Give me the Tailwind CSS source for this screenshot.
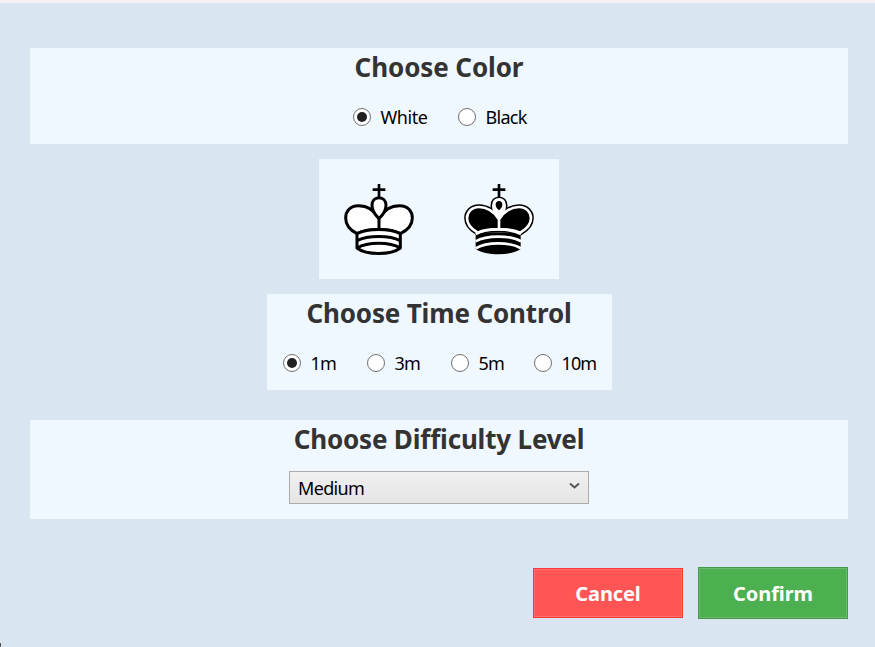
<!DOCTYPE html>
<html lang="en">
<head>
<meta charset="utf-8">
<title>Game setup</title>
<script src="https://cdn.jsdelivr.net/npm/@tailwindcss/browser@4"></script>
</head>
<body class="w-[875px] h-[647px] overflow-hidden bg-[#d9e5f0] border-t-3 border-[#f6eff5] font-['Noto_Sans','Open_Sans',sans-serif] text-black">
<main class="flex flex-col items-center pt-[45px] pl-[30px] pr-[27px]">
  <section class="w-full h-24 bg-[#eff7ff] flex flex-col items-center">
    <h2 class="h-10 leading-[38px] text-[26px] tracking-[-0.1px] font-bold text-[#333] whitespace-nowrap">Choose Color</h2>
    <div class="mt-5 h-[18px] w-[173px] flex text-[18px] leading-[18px] tracking-[-0.45px]">
      <label class="flex shrink-0 items-center w-[105px] gap-[10px]"><span class="size-[18px] shrink-0 rounded-full border border-[#707070] bg-white flex items-center justify-center"><i class="size-[10px] rounded-full bg-[#212121]"></i></span><span>White</span></label>
      <label class="flex shrink-0 items-center gap-[10px]"><span class="size-[18px] shrink-0 rounded-full border border-[#707070] bg-white"></span><span class="tracking-[-0.7px]">Black</span></label>
    </div>
  </section>

  <section class="mt-[15px] w-60 h-30 bg-[#eff7ff] flex">
    <svg class="size-[120px]" viewBox="-60 -60 360 360" fill="#fff" stroke="#000" stroke-width="9" stroke-linejoin="round">
      <path d="M120 15V56M101 32H139" stroke-width="8"/>
      <path d="M120 118C106 93 82 80 58 80C34 80 20 97 20 117C20 138 34 154 54 164C86 147 152 147 184 164C205 154 220 138 220 117C220 97 206 80 182 80C158 80 134 93 120 118V151"/>
      <path d="M120 119C107 107 99 95 99 79C99 65 108 56 120 56C132 56 141 65 141 79C141 95 133 107 120 119Z"/>
      <path d="M54 164C86 147 152 147 184 164V207C156 229 82 229 54 207Z"/>
      <path d="M54 185C86 168 152 168 184 185M54 207C86 188 152 188 184 207" fill="none"/>
    </svg>
    <svg class="size-[120px]" viewBox="-60 -60 360 360" stroke-linejoin="round">
      <path d="M120 15V56M101 32H139" stroke="#000" stroke-width="8"/>
      <g fill="#000" stroke="#000" stroke-width="17">
        <path d="M120 121C106 97 82 84 60 84C38 84 24 100 24 117C24 136 37 150 56 161C86 147 152 147 184 161C203 150 216 136 216 117C216 100 202 84 180 84C158 84 134 97 120 121Z"/>
        <path d="M120 118C109 105 103 95 103 80C103 68 110 61 120 61C130 61 137 68 137 80C137 95 131 105 120 118Z"/>
      </g>
      <path d="M50 160H185V210C156 231 80 231 50 210Z" fill="#000"/>
      <g fill="#000" stroke="#fff" stroke-width="8">
        <path d="M120 121C106 97 82 84 60 84C38 84 24 100 24 117C24 136 37 150 56 161C86 147 152 147 184 161C203 150 216 136 216 117C216 100 202 84 180 84C158 84 134 97 120 121V151"/>
        <path d="M120 118C109 105 103 95 103 80C103 68 110 61 120 61C130 61 137 68 137 80C137 95 131 105 120 118Z" fill="#fff"/>
        <path d="M50 165C82 147 154 147 186 165M50 187C82 168 154 168 186 187M50 208C82 188 154 188 186 208" fill="none"/>
      </g>
      <path d="M120 94C114 88 110 84 110 77C110 70 114 66 120 66C126 66 130 70 130 77C130 84 126 88 120 94Z"/>
    </svg>
  </section>

  <section class="mt-[15px] w-[345px] h-24 bg-[#eff7ff] flex flex-col items-center">
    <h2 class="h-10 leading-[38px] text-[26px] tracking-[-0.15px] font-bold text-[#333] whitespace-nowrap">Choose Time Control</h2>
    <div class="mt-5 h-[18px] w-[313px] flex text-[18px] leading-[18px] tracking-[-0.9px]">
      <label class="flex shrink-0 items-center w-[84px] gap-[10px]"><span class="size-[18px] shrink-0 rounded-full border border-[#707070] bg-white flex items-center justify-center"><i class="size-[10px] rounded-full bg-[#212121]"></i></span><span>1m</span></label>
      <label class="flex shrink-0 items-center w-[84px] gap-[10px]"><span class="size-[18px] shrink-0 rounded-full border border-[#707070] bg-white"></span><span>3m</span></label>
      <label class="flex shrink-0 items-center w-[83px] gap-[10px]"><span class="size-[18px] shrink-0 rounded-full border border-[#707070] bg-white"></span><span>5m</span></label>
      <label class="flex shrink-0 items-center gap-[10px]"><span class="size-[18px] shrink-0 rounded-full border border-[#707070] bg-white"></span><span>10m</span></label>
    </div>
  </section>

  <section class="mt-[30px] w-full h-[99px] bg-[#eff7ff] flex flex-col items-center">
    <h2 class="h-10 leading-[38px] text-[26px] tracking-[-0.18px] font-bold text-[#333] whitespace-nowrap">Choose Difficulty Level</h2>
    <div class="mt-[11px] w-[300px] h-[33px] border border-[#acacac] bg-linear-to-b from-[#f0f0f0] to-[#e5e5e5] flex items-center justify-between pl-2 pr-2">
      <span class="text-[18px] leading-8 tracking-[-0.65px] pt-px">Medium</span>
      <svg class="w-[11px] h-[8px] -mt-[3px]" viewBox="0 0 11 8" fill="none" stroke="#555" stroke-width="2"><path d="M1 1.5L5.5 5.5L10 1.5"/></svg>
    </div>
  </section>

  <div class="mt-12 w-full flex justify-end items-center gap-[15px] text-white text-[20px] tracking-[-0.1px] font-bold">
    <button class="w-[150px] h-[50px] border border-[#ff3636] bg-[#ff5555] shadow-[inset_0_0_0_1px_#ff7070] pt-px">Cancel</button>
    <button class="w-[150px] h-[52px] border border-[#439a47] bg-[#4caf50] shadow-[inset_0_0_0_1px_#6abb6d] pt-px">Confirm</button>
  </div>
</main>
<div class="absolute left-0 top-[643px] w-[1px] h-[4px] bg-[#555]"></div>
</body>
</html>
